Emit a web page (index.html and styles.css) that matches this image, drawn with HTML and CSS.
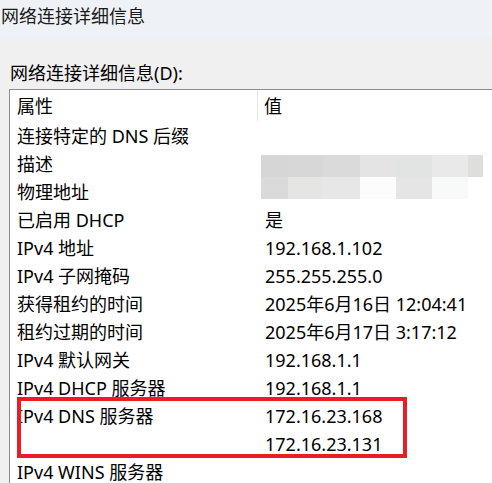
FILE: index.html
```html
<!DOCTYPE html>
<html lang="zh-CN">
<head>
<meta charset="utf-8">
<title>网络连接详细信息</title>
<link rel="stylesheet" href="styles.css">
</head>
<body>
<div class="titlebar">网络连接详细信息</div>
<div class="content">
  <div class="label">网络连接详细信息(D):</div>
  <div class="list">
    <div class="header">
      <div class="hcol1">属性</div>
      <div class="hcol2">值</div>
    </div>
    <div class="row"><div class="c1">连接特定的 DNS 后缀</div><div class="c2"></div></div>
    <div class="row"><div class="c1">描述</div><div class="c2"></div></div>
    <div class="row"><div class="c1">物理地址</div><div class="c2"></div></div>
    <div class="row"><div class="c1">已启用 DHCP</div><div class="c2">是</div></div>
    <div class="row"><div class="c1">IPv4 地址</div><div class="c2">192.168.1.102</div></div>
    <div class="row"><div class="c1">IPv4 子网掩码</div><div class="c2">255.255.255.0</div></div>
    <div class="row"><div class="c1">获得租约的时间</div><div class="c2">2025年6月16日 12:04:41</div></div>
    <div class="row"><div class="c1">租约过期的时间</div><div class="c2">2025年6月17日 3:17:12</div></div>
    <div class="row"><div class="c1">IPv4 默认网关</div><div class="c2">192.168.1.1</div></div>
    <div class="row"><div class="c1">IPv4 DHCP 服务器</div><div class="c2">192.168.1.1</div></div>
    <div class="row"><div class="c1">IPv4 DNS 服务器</div><div class="c2">172.16.23.168</div></div>
    <div class="row"><div class="c1"></div><div class="c2">172.16.23.131</div></div>
    <div class="row"><div class="c1">IPv4 WINS 服务器</div><div class="c2"></div></div>

    <div class="mosaic">
      <div class="m m1"></div><div class="m m2"></div><div class="m m3"></div><div class="m m4"></div><div class="m m5"></div><div class="m m6"></div><div class="m m7"></div>
      <div class="m m8"></div><div class="m m9"></div><div class="m m10"></div><div class="m m11"></div><div class="m m12"></div><div class="m m13"></div><div class="m m14"></div>
    </div>
    <div class="highlight"></div>
  </div>
</div>
</body>
</html>
```
FILE: styles.css
```css
html, body {
  margin: 0;
  padding: 0;
}
body {
  width: 492px;
  height: 483px;
  overflow: hidden;
  display: flex;
  flex-direction: column;
  background: #f0f0f0;
  font-family: "Noto Sans", "Noto Sans CJK SC", sans-serif;
  font-size: 18px;
  color: #000;
}
.titlebar {
  flex: none;
  height: 38px;
  line-height: 33px;
  padding-left: 1px;
  background: #eef2f6;
  color: #1a1a1a;
  white-space: nowrap;
}
.content {
  flex: 1;
  min-height: 0;
  display: flex;
  flex-direction: column;
  padding: 21px 0 0 9px;
}
.label {
  flex: none;
  line-height: 28px;
  padding-left: 1px;
  margin-bottom: 2px;
  white-space: nowrap;
}
.list {
  position: relative;
  flex: 1;
  min-height: 0;
  overflow: hidden;
  background: #fff;
  border-top: 1px solid #8c8c94;
  border-left: 1px solid #8c8c94;
}
.header {
  display: flex;
  height: 32px;
  line-height: 32px;
}
.hcol1 {
  width: 240px;
  padding-left: 7px;
  border-right: 1px solid #e3e3e3;
  height: 31px;
}
.hcol2 {
  padding-left: 6px;
}
.row {
  display: flex;
  height: 28px;
  line-height: 28px;
  white-space: nowrap;
}
.c1 {
  width: 241px;
  padding-left: 7px;
}
.c2 {
  padding-left: 7px;
}
.mosaic {
  position: absolute;
  left: 251px;
  top: 65px;
  display: grid;
  grid-template-columns: 27px 35px 37px 36px 36px 36px 15px;
  grid-template-rows: 22px 22px;
}
.m1 { background: #d6d6d6; }
.m2 { background: #d7d7d7; }
.m3 { background: #dadada; }
.m4 { background: #e4e4e4; }
.m5 { background: #e2e3e3; }
.m6 { background: #e9e9e9; }
.m7 { background: #dededd; }
.m8 { background: #dadada; }
.m9 { background: #e5e5e3; }
.m10 { background: #e7e7e7; }
.m11 { background: #fcfcfc; }
.m12 { background: #e5e5e5; }
.m13 { background: #f8f9f9; }
.m14 { background: #ffffff; }
.highlight {
  position: absolute;
  left: 7px;
  top: 307px;
  width: 390px;
  height: 61px;
  box-sizing: border-box;
  border: 4px solid #e81d25;
}
```
